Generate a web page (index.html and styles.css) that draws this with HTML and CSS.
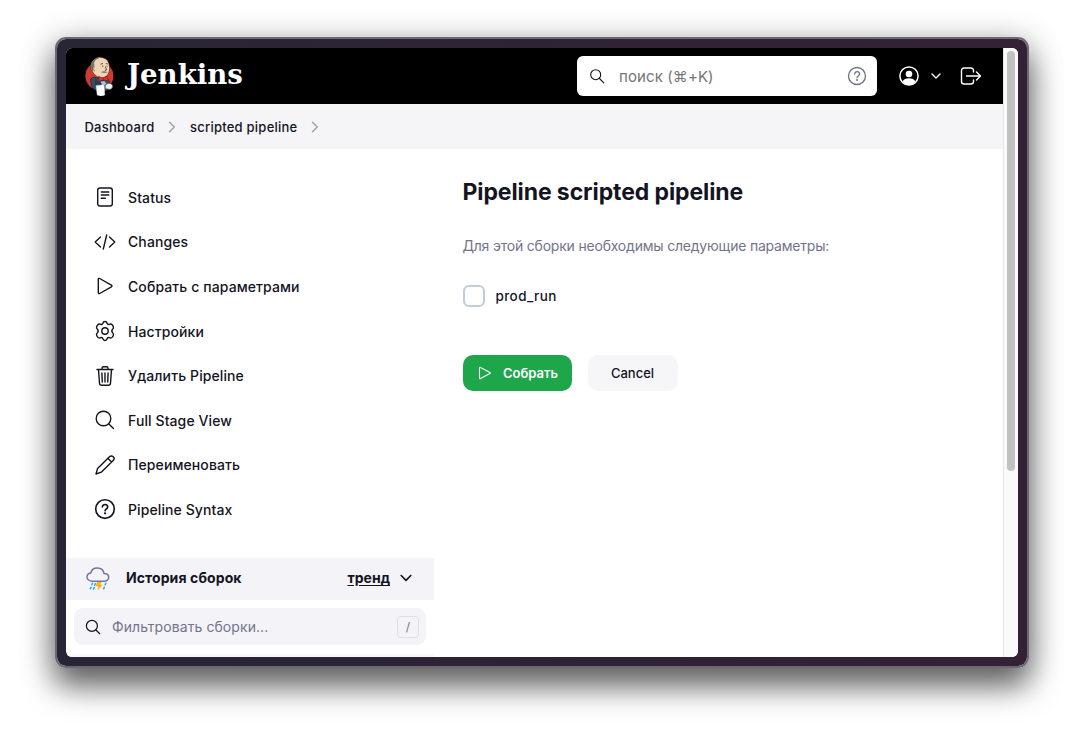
FILE: index.html
```html
<!DOCTYPE html>
<html lang="ru">
<head>
<meta charset="utf-8">
<title>Pipeline scripted pipeline [Jenkins]</title>
<link rel="stylesheet" href="styles.css">
</head>
<body>
<div class="window">
  <div class="screen">
    <div class="page">
      <header class="header">
        <a class="brand">
          <svg class="butler" viewBox="0 0 30 40">
            <ellipse cx="14.4" cy="20" rx="14" ry="14" fill="#d33833"/>
            <path d="M5.500 23 9 21l5 1.500 7-1.500 3.500 4.500v5.500c0 2-2 3.500-5 4l-8-.5c-4-1-5.500-5-6-11.500z" fill="#335061" stroke="#142530" stroke-width=".7"/>
            <path d="M10 22l3 4 3-1 4-2-1 8-9-1z" fill="#243d4d"/>
            <path d="M6 8.500C7.500 3.500 12 .8 16.500 1.400c5 .7 7.800 4 8 9.500.2 5-.8 8-4.300 10-3 1.800-7 1.200-9.500-1.400C8 17.500 5 13 6 8.500z" fill="#f0d6b7" stroke="#3b2a22" stroke-width=".7"/>
            <path d="M6 8.500C7.500 3.500 12 .8 16.500 1.400c-3.500.8-6.500 2-7.300 5.600l.3 5.500-1.800 2.700c-1.700-2-2.300-4.200-1.700-6.700z" fill="#77736f"/>
            <path d="M9.200 10.500c-2 0-1.700 4 .5 4.500" fill="#f0d6b7" stroke="#3b2a22" stroke-width=".6"/>
            <path d="M15.500 8.200l2.500-.7M20.800 7.500l2 .5M17 10.200h1.300M21.500 10.200h1M20.500 10.500l.9 3.500-1.600.4" fill="none" stroke="#3b2a22" stroke-width=".8"/>
            <path d="M16 16.300c1.500-1.500 4.500-1.500 7 0-2 .9-5 1-7 0z" fill="#86766b"/>
            <path d="M13.500 20.200l4.500 2 4.300-2 .9 4.800-5-1.200-4 1.500z" fill="#e3312f" stroke="#6b1413" stroke-width=".5"/>
            <path d="M15.500 25.500l4-.5 2 3-4 2z" fill="#a9c2d2"/>
            <path d="M11 29.500l8.200-.8.7 10.200c-2.700 1.500-5.500 1.400-7.800.2z" fill="#fff" stroke="#b9b9b9" stroke-width=".4"/>
            <path d="M20.500 29.200c2-2.500 6-2.400 7 .2.500 2-.8 3.600-2.800 4l-4.400-1z" fill="#eee" stroke="#555" stroke-width=".5"/>
          </svg>
          <span class="brand-name">Jenkins</span>
        </a>
        <div class="search">
          <svg class="i16" viewBox="0 0 16 16"><g class="ln"><circle cx="6.700" cy="6.700" r="5"/><path d="M10.500 10.500l4.300 4.300"/></g></svg>
          <span class="search-text">поиск (⌘+K)</span>
          <svg class="i20 muted" viewBox="0 0 20 20"><g class="ln ln-15"><circle cx="10" cy="10" r="8.500"/><path d="M7.700 8c0-3.200 4.800-3.200 4.800.1 0 1.900-2.400 1.900-2.400 3.700"/></g><circle cx="10.050" cy="14.100" r="1" fill="currentColor"/></svg>
        </div>
        <svg class="user" viewBox="0 0 20 20"><circle cx="10" cy="10" r="9.100" fill="none" stroke="#fff" stroke-width="1.500"/><circle cx="10" cy="8" r="3.300" fill="#fff"/><path d="M3.400 15.500c1.500-2.200 3.700-3.300 6.600-3.300s5.100 1.100 6.600 3.300C15 17.800 12.800 19 10 19s-5-1.200-6.600-3.500z" fill="#fff"/></svg>
        <svg class="user-chevron" viewBox="0 0 10 6"><path class="ln ln-15" d="M1 1l4 4 4-4"/></svg>
        <svg class="logout" viewBox="0 0 22 18"><g class="ln ln-15"><path d="M13.500 5V3.500C13.500 2 12.500 1 11 1H4C2.500 1 1.500 2 1.500 3.500v11C1.500 16 2.500 17 4 17h7c1.500 0 2.500-1 2.500-2.500V13M6.500 9H20M16.500 5l4 4-4 4"/></g></svg>
      </header>
      <nav class="crumbs">
        <span>Dashboard</span>
        <svg class="crumb-arrow" viewBox="0 0 8 12"><path d="M1.500 1.200L6.300 6l-4.800 4.800"/></svg>
        <span>scripted pipeline</span>
        <svg class="crumb-arrow" viewBox="0 0 8 12"><path d="M1.500 1.200L6.300 6l-4.800 4.800"/></svg>
      </nav>
      <div class="body">
        <aside class="side">
          <ul class="tasks">
            <li><svg viewBox="0 0 22 22"><g class="ln ln-15"><rect x="3.700" y="2" width="14.600" height="18" rx="2.300"/><path d="M7.300 6h7.500M7.300 9h7.500M7.300 12.300h4"/></g></svg><span>Status</span></li>
            <li><svg viewBox="0 0 22 22"><path class="ln ln-15" d="M6.500 6l-5.300 5 5.300 5M15.500 6l5.300 5-5.300 5M12.700 4l-3.400 14"/></svg><span>Changes</span></li>
            <li><svg viewBox="0 0 22 22"><path class="ln ln-15" d="M4.300 4.300v13.400c0 .8.700 1.200 1.400.8l11.700-6.700c.7-.4.700-1.200 0-1.600L5.700 3.500c-.7-.4-1.400 0-1.400.8z"/></svg><span>Собрать с параметрами</span></li>
            <li><svg viewBox="0 0 22 22"><g class="ln ln-15"><circle cx="11" cy="11" r="3.200"/><path d="M8.900 3.300Q9.200 1.500 11 1.500t2.100 1.800q.6 1.500 2.200 1l.6-.2q1.500-.4 2.600 1.100l.8 1.500q.7 1.500-.7 2.600-1.600 1.700 0 3.400 1.400 1.100.7 2.600l-.8 1.500q-1.100 1.500-2.600 1.100l-.6-.2q-1.600-.5-2.200 1Q12.800 20.500 11 20.500t-2.100-1.800q-.6-1.500-2.200-1l-.6.2q-1.500.4-2.600-1.100l-.8-1.500q-.7-1.500.7-2.600 1.600-1.700 0-3.400Q2 8.200 2.700 6.700l.8-1.500Q4.600 3.700 6.100 4.100l.6.200q1.600.5 2.200-1z"/></g></svg><span>Настройки</span></li>
            <li><svg viewBox="0 0 22 22"><g class="ln ln-15"><path d="M3 4.500h16M4.500 4.700l1 13.500c.1 1.200 1 2 2.200 2h6.600c1.200 0 2.100-.8 2.200-2l1-13.500M8 4.500V3.200C8 2.400 8.600 1.800 9.400 1.800h3.200c.8 0 1.400.6 1.400 1.400v1.300M7.900 8l.4 9M11 8v9M14.100 8l-.4 9"/></g></svg><span>Удалить Pipeline</span></li>
            <li><svg viewBox="0 0 22 22"><g class="ln ln-15"><circle cx="9.500" cy="9.500" r="7.300"/><path d="M14.900 14.900l4.600 4.600"/></g></svg><span>Full Stage View</span></li>
            <li><svg viewBox="0 0 22 22"><path class="ln ln-15" d="M2 20l1.600-5.600L15.700 2.600c.8-.8 2.400-.8 3.200 0l.5.500c.8.800.8 2.300 0 3.100L7.300 18.200zM14 4.500L17.600 8"/></svg><span>Переименовать</span></li>
            <li><svg viewBox="0 0 22 22"><g class="ln ln-18"><circle cx="11" cy="11" r="9.300"/><path d="M8.400 9c0-3.400 5.300-3.400 5.300.1 0 1.900-2.600 1.900-2.600 3.700"/></g><circle cx="11.050" cy="15.300" r="1.150" fill="currentColor"/></svg><span>Pipeline Syntax</span></li>
          </ul>
          <div class="history">
            <svg class="weather" viewBox="0 0 24 24"><path d="M6.500 14.200C3.200 14.200 1 12.400 1 10c0-2.300 1.800-3.800 3.800-4.100C5.400 3.200 8 1 11.300 1c3.500 0 6.200 2.200 6.700 5.400 2.700 0 4.700 1.600 4.700 3.900 0 2.300-2 3.900-4.600 3.900z" fill="none" stroke="#75759a" stroke-width="1.500"/><path d="M6.500 16.200l-.7 1.600M5 20.300l-.6 1.500M9.500 16.500l-.8 1.800M8.200 20.500l-.7 1.600M19.800 16.200l-.7 1.600M18.300 20.300l-.6 1.500" stroke="#27a8e8" stroke-width="1.500" stroke-linecap="round"/><path d="M11.200 15h4.200l-1.200 2.700h2.600l-5.300 5.900.8-4.300H9.600z" fill="#fdae1a"/></svg>
            <b class="history-title">История сборок</b>
            <a class="trend">тренд</a>
            <svg class="history-chevron" viewBox="0 0 12 8"><path class="ln ln-18" d="M1.200 1.500L6 6.300l4.800-4.800"/></svg>
          </div>
          <div class="filter">
            <svg class="i16" viewBox="0 0 16 16"><g class="ln ln-13"><circle cx="6.900" cy="6.900" r="5.500"/><path d="M11 11l3.700 3.700"/></g></svg>
            <span class="filter-text">Фильтровать сборки...</span>
            <kbd class="key">/</kbd>
          </div>
          <div class="builds"></div>
        </aside>
        <main class="main">
          <h1 class="title">Pipeline scripted pipeline</h1>
          <p class="intro">Для этой сборки необходимы следующие параметры:</p>
          <label class="param"><span class="box"></span><span>prod_run</span></label>
          <div class="actions">
            <button class="btn build"><svg viewBox="0 0 14 14"><path class="ln" d="M1.500 2v10c0 .7.500.9 1 .6l9.400-5c.6-.3.600-.9 0-1.200l-9.400-5c-.5-.3-1-.1-1 .6z"/></svg><span>Собрать</span></button>
            <button class="btn cancel">Cancel</button>
          </div>
        </main>
      </div>
    </div>
    <div class="scrollbar"><div class="thumb"></div></div>
  </div>
</div>
</body>
</html>
```

FILE: styles.css
```css
* { box-sizing: border-box; }
body {
  margin: 0;
  width: 1084px;
  height: 741px;
  padding: 37px 55px 73px;
  overflow: hidden;
  background: #fff;
  font-family: Inter, "Noto Sans", sans-serif;
  color: #14141f;
}
svg { display: block; flex: none; }
.window {
  width: 974px;
  height: 631px;
  padding: 9px;
  border: 2px solid #6b6870;
  border-radius: 11px;
  background: linear-gradient(90deg, #282537, #342135) padding-box;
  box-shadow: 0 19px 30px rgba(0, 0, 0, .5), 0 6px 34px rgba(0, 0, 0, .32);
}
.screen {
  display: flex;
  width: 952px;
  height: 609px;
  border-radius: 6px;
  overflow: hidden;
  background: #fff;
}
.page { width: 937px; height: 609px; overflow: hidden; }
.scrollbar {
  width: 15px;
  padding: 3px 3px 0;
  border-left: 1px solid #e6e6e6;
  background: #fafafa;
}
.thumb { width: 8px; height: 420px; border-radius: 4px; background: #c1c1c1; }

.ln { fill: none; stroke: currentColor; stroke-width: 1.1; stroke-linecap: round; stroke-linejoin: round; }
.ln-13 { stroke-width: 1.25; }
.ln-15 { stroke-width: 1.4; }
.ln-18 { stroke-width: 1.65; }
.i16 { width: 16px; height: 16px; }
.i20 { width: 20px; height: 20px; }
.muted { color: #73738c; }

.header {
  display: flex;
  align-items: center;
  height: 56px;
  padding: 0 21px 0 19px;
  background: #000;
  color: #fff;
}
.brand { display: flex; align-items: center; width: 492px; }
.butler { width: 30px; height: 40px; }
.brand-name {
  margin: -2px 0 0 12px;
  font: bold 28px/36px "DejaVu Serif", "Liberation Serif", serif;
  transform: scaleX(.985);
  transform-origin: left;
}
.search {
  display: flex;
  flex: none;
  align-items: center;
  width: 300px;
  height: 40px;
  padding: 0 10px 0 12px;
  border-radius: 6px;
  background: #fff;
  color: #14141f;
}
.search-text { flex: 1; margin-left: 14px; font-size: 15px; letter-spacing: .1px; color: #757575; }
.user { width: 20px; height: 20px; margin-left: 22px; }
.user-chevron { width: 10px; height: 6px; margin-left: 12px; }
.logout { width: 22px; height: 18px; margin-left: 19px; }

.crumbs {
  display: flex;
  align-items: center;
  height: 45px;
  padding-left: 18.500px;
  background: #f5f5f8;
  font-size: 13px;
  font-weight: 500;
  letter-spacing: .24px;
}
.crumb-arrow { width: 8px; height: 12px; margin: 0 14px 0 13.500px; fill: none; stroke: #a0a0b4; stroke-width: 1.500; stroke-linecap: round; stroke-linejoin: round; }

.body { display: flex; height: 508px; }
.side { width: 368px; padding-top: 26px; }
.tasks { margin: 0; padding: 0 0 0 28px; list-style: none; height: 382.500px; }
.tasks li { display: flex; align-items: center; gap: 12px; height: 44.600px; font-size: 14px; font-weight: 500; letter-spacing: .1px; }
.tasks svg { width: 22px; height: 22px; }

.history {
  display: flex;
  align-items: center;
  height: 42px;
  padding: 0 22px 2px 20px;
  background: #f3f3f8;
  font-size: 14px;
  letter-spacing: .1px;
}
.weather { width: 24px; height: 24px; margin-top: 2px; }
.history-title { flex: 1; margin-left: 16px; font-weight: 700; }
.trend { font-weight: 700; letter-spacing: 0; text-decoration: underline; text-underline-offset: 2px; }
.history-chevron { width: 12px; height: 8px; margin: 1px 0 0 10px; }
.filter {
  display: flex;
  align-items: center;
  width: 352px;
  height: 37px;
  margin: 8.500px 8px 0;
  padding: 0 7px 0 11px;
  border-radius: 9px;
  background: #f3f3f8;
}
.filter-text { flex: 1; margin-left: 11px; font-size: 14px; letter-spacing: .08px; color: #73738c; }
.key {
  width: 22px;
  height: 22px;
  border: 1px solid #dfdfe9;
  border-radius: 4px;
  font: 12px/20px Inter, sans-serif;
  text-align: center;
  color: #73738c;
}
.builds { height: 10px; margin-top: 8.500px; background: #f8f8fa; }

.main { padding: 27px 0 0 28.500px; }
.title { margin: 0; font-size: 23px; line-height: 32px; font-weight: 700; letter-spacing: -.1px; }
.intro { margin: 28px 0 0; font-size: 14px; line-height: 20px; letter-spacing: -.2px; color: #73738c; }
.param { display: flex; align-items: center; gap: 11px; height: 22px; margin-top: 29px; font-size: 13.500px; font-weight: 500; letter-spacing: .4px; }
.box { width: 22px; height: 22px; border: 2px solid #c3ccd4; border-radius: 6px; }
.actions { display: flex; gap: 16px; margin-top: 48px; }
.btn {
  display: flex;
  align-items: center;
  justify-content: center;
  height: 36px;
  padding: 0;
  border: 0;
  border-radius: 10px;
  font: 500 13px/20px Inter, sans-serif;
}
.build { width: 109px; padding-left: 2px; gap: 11px; background: #1ea64b; color: #fff; font-weight: 600; }
.build svg { width: 14px; height: 14px; }
.cancel { width: 90px; background: #f6f6f9; color: #14141f; }
```
